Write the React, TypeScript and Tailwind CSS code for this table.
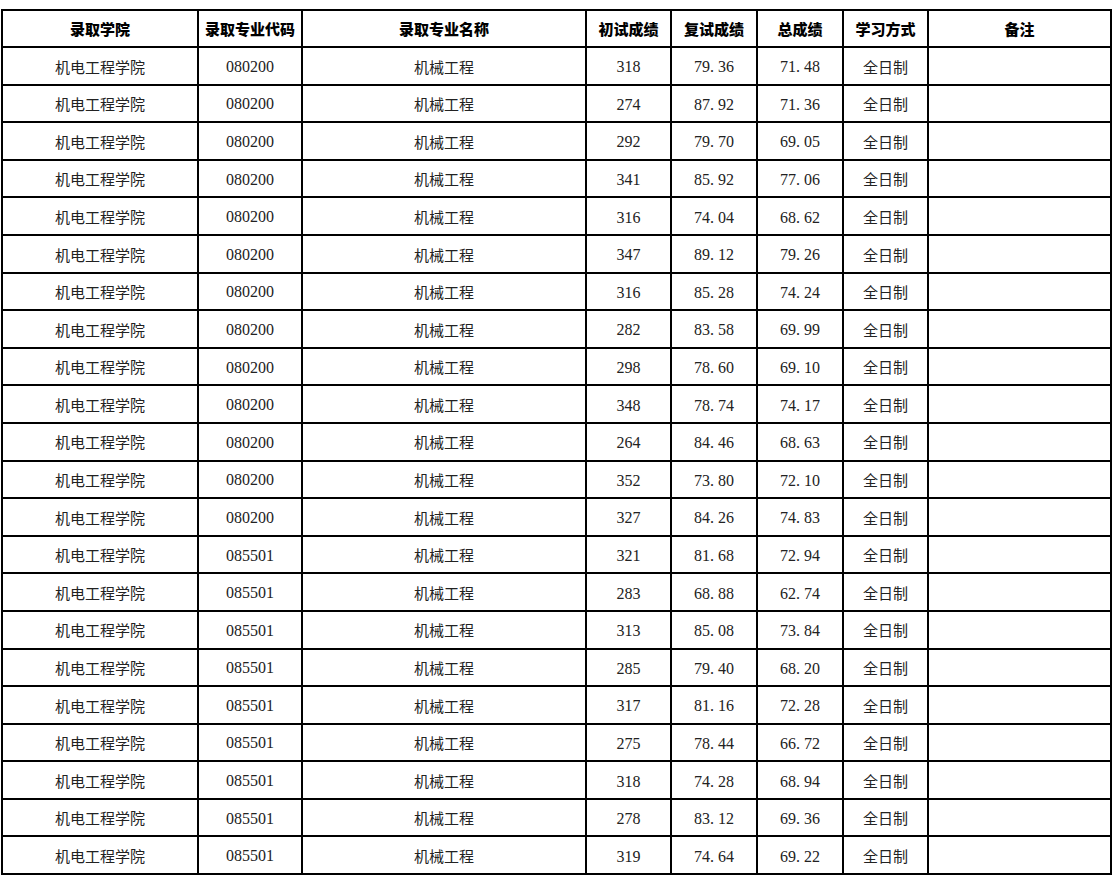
const rows: [string, string, string, string][] = [
  ["080200", "318", "79.36", "71.48"],
  ["080200", "274", "87.92", "71.36"],
  ["080200", "292", "79.70", "69.05"],
  ["080200", "341", "85.92", "77.06"],
  ["080200", "316", "74.04", "68.62"],
  ["080200", "347", "89.12", "79.26"],
  ["080200", "316", "85.28", "74.24"],
  ["080200", "282", "83.58", "69.99"],
  ["080200", "298", "78.60", "69.10"],
  ["080200", "348", "78.74", "74.17"],
  ["080200", "264", "84.46", "68.63"],
  ["080200", "352", "73.80", "72.10"],
  ["080200", "327", "84.26", "74.83"],
  ["085501", "321", "81.68", "72.94"],
  ["085501", "283", "68.88", "62.74"],
  ["085501", "313", "85.08", "73.84"],
  ["085501", "285", "79.40", "68.20"],
  ["085501", "317", "81.16", "72.28"],
  ["085501", "275", "78.44", "66.72"],
  ["085501", "318", "74.28", "68.94"],
  ["085501", "278", "83.12", "69.36"],
  ["085501", "319", "74.64", "69.22"],
]

const headers = ["录取学院", "录取专业代码", "录取专业名称", "初试成绩", "复试成绩", "总成绩", "学习方式", "备注"]
const widths = ["w-[196px]", "w-[104px]", "w-[284px]", "w-[85px]", "w-[86px]", "w-[86px]", "w-[85px]", "w-[183px]"]

const cjk = "font-['Noto_Sans_CJK_SC',sans-serif]"
const serif = "font-['Liberation_Serif','Noto_Sans_CJK_SC',serif]"
const cell = "border-2 border-black p-0 pt-[2px] text-center"

// SimSun-style number: wide full stop
function Num({ v }: { v: string }) {
  const [a, b] = v.split(".")
  return (
    <span className={`${serif} text-[16px]`}>
      {a}
      {b !== undefined && (
        <>
          <span className="inline-block w-[8px] text-left">.</span>
          {b}
        </>
      )}
    </span>
  )
}

export default function App() {
  return (
    <div className="bg-white min-h-[881px] pt-[9px] pl-[1px]">
      <table className="border-collapse table-fixed w-[1111px] text-[#222]">
        <colgroup>
          {widths.map((w, i) => (
            <col key={i} className={w} />
          ))}
        </colgroup>
        <thead>
          <tr className="h-[37px]">
            {headers.map((h) => (
              <th key={h} className={`${cell} text-[15px] font-black text-black ${cjk}`}>
                {h}
              </th>
            ))}
          </tr>
        </thead>
        <tbody>
          {rows.map((r, i) => (
            <tr key={i} className="h-[37.6px]">
              <td className={`${cell} text-[15px] ${cjk}`}>机电工程学院</td>
              <td className={`${cell} text-[16px] ${serif}`}>{r[0]}</td>
              <td className={`${cell} text-[15px] ${cjk}`}>机械工程</td>
              <td className={cell}>
                <Num v={r[1]} />
              </td>
              <td className={cell}>
                <Num v={r[2]} />
              </td>
              <td className={cell}>
                <Num v={r[3]} />
              </td>
              <td className={`${cell} text-[15px] ${cjk}`}>全日制</td>
              <td className={cell}></td>
            </tr>
          ))}
        </tbody>
      </table>
    </div>
  )
}
